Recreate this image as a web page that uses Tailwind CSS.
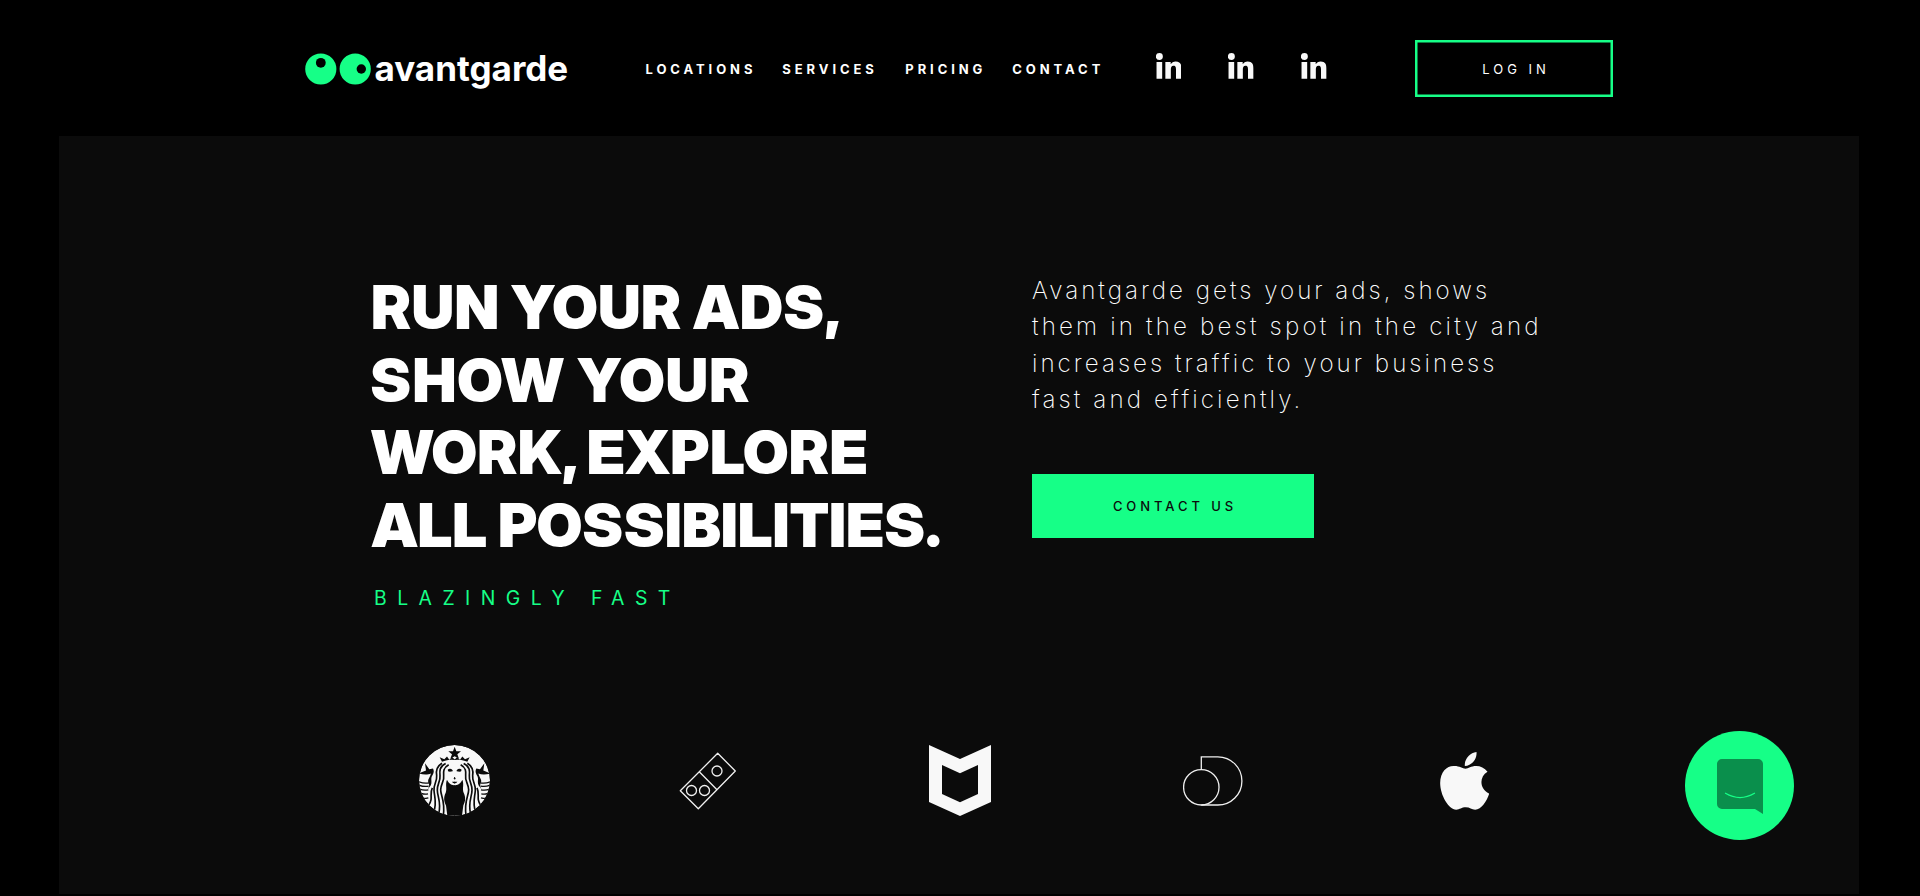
<!DOCTYPE html>
<html lang="en">
<head>
<meta charset="utf-8">
<title>avantgarde</title>
<script src="https://cdn.jsdelivr.net/npm/@tailwindcss/browser@4"></script>
</head>
<body class="bg-black text-white font-['Inter',sans-serif] h-[896px] overflow-hidden">
<svg class="hidden">
  <symbol id="linkedin" viewBox="0 0 77 79"><circle cx="10" cy="10.5" r="10.5"/><path d="M1.500 27h17v50.500h-17zM28 27h16v7c3-5 8-8.500 15-8.500 14 0 17.500 9 17.500 21v31H60V50c0-6-.5-12-7.500-12S44.500 44 44.500 50v27.500H28z"/></symbol>
</svg>

<header class="h-[136px] pl-[305px] pt-px flex items-center">
  <a class="flex items-center w-[340.500px] shrink-0">
    <svg class="w-[66px] h-[32px] shrink-0" viewBox="0 0 66 32"><g fill="#16ff87"><circle cx="15.800" cy="16" r="15.600"/><circle cx="50.200" cy="16" r="15.600"/></g><circle cx="15.800" cy="9.800" r="4.900"/><circle cx="56.300" cy="16" r="4.700"/></svg>
    <span class="ml-[3.500px] text-[35px] leading-[35px] font-bold">avantgarde</span>
  </a>
  <nav class="flex gap-[26px] w-[510px] shrink-0 text-[13px] leading-5 font-bold tracking-[3.92px] pt-px">
    <a>LOCATIONS</a><a class="mr-[1.500px]">SERVICES</a><a>PRICING</a><a>CONTACT</a>
  </nav>
  <div class="flex gap-[47px] -mt-[5px] w-[259.500px] shrink-0 fill-[#f9f9f9]">
    <svg class="w-[25.7px] h-[26.3px]"><use href="#linkedin"/></svg>
    <svg class="w-[25.7px] h-[26.3px]"><use href="#linkedin"/></svg>
    <svg class="w-[25.7px] h-[26.3px]"><use href="#linkedin"/></svg>
  </div>
  <a class="w-[198px] h-[56.500px] shrink-0 shadow-[inset_0_0_0_2.5px_#16ff87] flex items-center justify-center text-[13px] tracking-[4px] pl-[4px] pt-[2px]">LOG IN</a>
</header>

<main class="ml-[59px] w-[1799.5px] h-[758px] bg-[#0b0b0b] pt-[135px]">
  <div class="flex">
    <section class="pl-[311px] w-[973px] shrink-0">
      <h1 class="font-['Inter_Display','Inter',sans-serif] text-[60.4px] leading-[72.5px] font-black whitespace-nowrap">
        <span class="block pl-px tracking-[0.4px]">RUN YOUR ADS,</span>
        <span class="block tracking-[1.1px]">SHOW YOUR</span>
        <span class="block pl-px tracking-[0.400px]">WORK, EXPLORE</span>
        <span class="block pl-[1.500px] tracking-[-0.05px]">ALL POSSIBILITIES.</span>
      </h1>
      <p class="mt-[25px] pl-[4px] text-[19.4px] leading-6 tracking-[10.45px] text-[#16ff87]">BLAZINGLY FAST</p>
    </section>
    <section class="pt-[2px]">
      <p class="text-[24.2px] leading-[36.25px] font-extralight whitespace-nowrap"><span class="tracking-[2.98px]">Avantgarde gets your ads, shows</span><br><span class="tracking-[3.15px]">them in the best spot in the city and</span><br><span class="tracking-[3px]">increases traffic to your business</span><br><span class="tracking-[3.1px]">fast and efficiently.</span></p>
      <a class="mt-[55.500px] flex items-center justify-center w-[282px] h-[64px] bg-[#16ff87] text-[#0b0b0b] text-[13px] font-medium tracking-[3.93px] pl-[4px] pt-[2px]">CONTACT US</a>
    </section>
  </div>

  <div class="mt-[135px] pl-[360px] h-[71px] flex items-center fill-[#f8f8f8] text-[#f0f0f0]">
    <!-- siren -->
    <svg class="w-[71px] h-[71px] mr-[189px]" viewBox="27 31.500 213 213">
      <defs>
        <clipPath id="disc"><circle cx="133.500" cy="138" r="106.500"/></clipPath>
        <g id="half">
          <path fill="#0b0b0b" d="M133 75c15 0 27 2 39 7l7-14-14 6-8-8-7 10-9-8-8 8z"/>
          <path fill="#0b0b0b" d="M199 102l11 2 13-18-3 22 22 9c-14 4-28 4-37 0 4 14 11 18 8 26-4 8-3 15 2 22l-9-12c-5-11 0-17-3-26-5-10-9-16-4-25z"/>
          <path fill="#0b0b0b" d="M133 244v-92c11 2 20-7 24-16 6 15-1 26 4 39 7 14 5 27-1 38l-4 31z"/>
          <g fill="none" stroke="#0b0b0b" stroke-width="5">
            <path d="M152 91c16 9 16 20 15 32-3 16 9 25 9 43 0 19-14 32-8 77"/>
            <path d="M161 87c20 9 18 25 17 36-2 17 9 26 8 44 0 20-13 36-4 72"/>
            <path d="M172 86c17 10 18 25 16 37-2 18 10 27 8 45-2 23-9 36 1 66"/>
            <path d="M201 160c7 14 2 24 4 36 2 10 6 14 9 20"/>
            <path d="M211 145c11 2 19 1 30-3M212 155c11 2 19 1 29-3M213 166c10 2 18 1 26-2M214 178c9 2 14 1 20-1M213 190c7 2 10 2 15 2" stroke-width="4"/>
          </g>
          <path fill="#0b0b0b" d="M140 107c5-5 11-5 15-1l-2 5c-5 1-9 0-13-1zM133 142h9c-2 4-5 5-9 5zM133 127l4 4-1 3h-3z"/>
        </g>
      </defs>
      <g clip-path="url(#disc)">
        <circle cx="133.500" cy="138" r="106.500"/>
        <use href="#half"/><use href="#half" transform="matrix(-1 0 0 1 268 0)"/>
        <path fill="#0b0b0b" d="M134 37l5 13h14l-11 9 5 14-13-8-13 8 5-14-11-9h14z"/>
      </g>
    </svg>
    <!-- domino -->
    <svg class="w-[58px] h-[58px] mr-[192px]" viewBox="0 0 58 58" fill="none" stroke="currentColor" stroke-width="1.300"><path stroke-linejoin="round" d="M38.700 1.300 56.300 19 19.300 56.700 1.300 38.700zM20.500 20 38 37.800"/><circle cx="38" cy="19" r="5"/><circle cx="12.500" cy="38.500" r="5"/><circle cx="25.500" cy="38.500" r="5"/></svg>
    <!-- shield -->
    <svg class="w-[62px] h-[71px] mr-[192px]" viewBox="0 0 62 71"><path fill-rule="evenodd" d="M0 0 31 14 62 0v57L31 71 0 57zM13 20v29l18 8.300L49 49V20l-18 8.300z"/></svg>
    <!-- circle and D -->
    <svg class="w-[60px] h-[50px] mr-[196.500px]" viewBox="0 0 60 50" fill="none" stroke="currentColor" stroke-width="1.300"><circle cx="18.300" cy="31.300" r="17.700"/><path d="M18.300 13.600V.8h16.500a24.100 24.100 0 0 1 0 48.200H18.300"/></svg>
    <!-- apple -->
    <svg class="w-[49px] h-[58px]" viewBox="31 36 146 174"><path d="M140 36c2 21-14 41-35 42-2-20 15-40 35-42zM107 86c9 0 16-8 32-8 13 0 25 6 34 17-26 15-24 53 5 66-6 20-23 48-42 48-11 0-16-7-28-7-13 0-18 7-29 7-22 0-48-43-48-80 0-35 22-53 43-51 15 0 24 8 33 8z"/></svg>
  </div>
</main>

<!-- chat launcher -->
<button class="absolute left-[1685.300px] top-[731.300px] size-[109px] rounded-full bg-[#16ff87] flex items-center justify-center">
  <svg class="w-[46px] h-[55px] mt-px" viewBox="0 0 46 55"><path fill="#0a8f4c" d="M5 0h36a5 5 0 0 1 5 5v50l-8-5H5a5 5 0 0 1-5-5V5a5 5 0 0 1 5-5z"/><path d="M8.500 34.300q14.500 8.500 29 0" fill="none" stroke="#16ff87" stroke-width="1.300" stroke-linecap="round"/></svg>
</button>
</body>
</html>
